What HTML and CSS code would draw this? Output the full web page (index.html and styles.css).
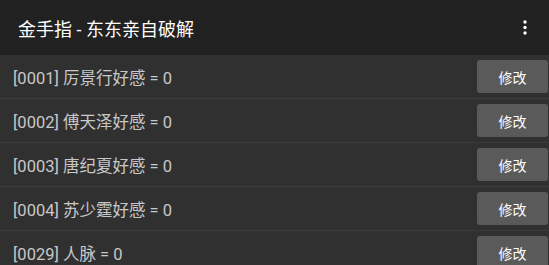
FILE: index.html
```html
<!DOCTYPE html>
<html>
<head>
	<meta charset="utf-8">
	<title>金手指</title>
	<link rel="stylesheet" href="styles.css">
</head>
<body>
	<div class="toolbar">
		<span class="title">金手指 - 东东亲自破解</span>
		<svg class="menu" width="4" height="16" viewBox="0 0 4 16">
			<circle cx="2" cy="2" r="1.7" fill="#fff"/>
			<circle cx="2" cy="7.5" r="1.7" fill="#fff"/>
			<circle cx="2" cy="13" r="1.7" fill="#fff"/>
		</svg>
	</div>

	<div class="list">
		<div class="row">
			<span class="label">[0001] 厉景行好感 = 0</span>
			<button class="btn">修改</button>
		</div>
		<div class="row">
			<span class="label">[0002] 傅天泽好感 = 0</span>
			<button class="btn">修改</button>
		</div>
		<div class="row">
			<span class="label">[0003] 唐纪夏好感 = 0</span>
			<button class="btn">修改</button>
		</div>
		<div class="row">
			<span class="label">[0004] 苏少霆好感 = 0</span>
			<button class="btn">修改</button>
		</div>
		<div class="row">
			<span class="label">[0029] 人脉 = 0</span>
			<button class="btn">修改</button>
		</div>
	</div>
</body>
</html>
```

FILE: styles.css
```css
body {
	margin: 0;
	background-color: #303030;
	font-family: Roboto, "Noto Sans CJK SC", sans-serif;
	overflow: hidden;
}

.toolbar {
	height: 55px;
	background-color: #212121;
	display: flex;
	align-items: center;
	justify-content: space-between;
	padding: 0 22px 0 18px;
	box-sizing: border-box;
}

.title {
	color: #ffffff;
	font-size: 18px;
}

.menu {
	display: block;
}

.row {
	height: 43px;
	display: flex;
	align-items: center;
	justify-content: space-between;
	padding-left: 13px;
	padding-right: 1px;
	border-bottom: 1px solid #3c3c3c;
}

.label {
	color: #c8c8c8;
	font-size: 16.5px;
}

.btn {
	width: 71px;
	height: 33px;
	background-color: #5a5a5a;
	color: #ffffff;
	border: none;
	border-radius: 3px;
	font-family: Roboto, "Noto Sans CJK SC", sans-serif;
	font-size: 14px;
	padding: 0;
}
```
